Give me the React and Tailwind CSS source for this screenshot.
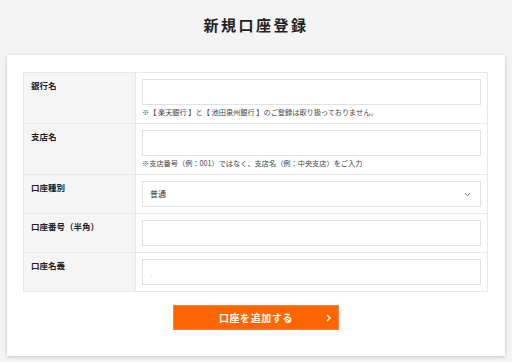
import React from 'react'

const font = { fontFamily: '"Noto Sans CJK JP", "Noto Sans", sans-serif' }

function Row({ label, children, last }) {
  return (
    <div className={`flex ${last ? '' : 'border-b border-[#e8e8e8]'}`}>
      <div className="w-[112px] shrink-0 bg-[#f5f5f5] border-r border-[#e8e8e8] px-[7px] py-[6px]">
        <p className="text-[8.5px] leading-[12px] font-bold text-[#222]">{label}</p>
      </div>
      <div className="flex-1 px-[6px] py-[6px]">{children}</div>
    </div>
  )
}

function Field({ placeholder }) {
  return (
    <input
      type="text"
      placeholder={placeholder}
      className="block w-full h-[26px] border border-[#dfe1e8] bg-white px-[7px] text-[8px] outline-none placeholder:text-[#c8c8c8]"
    />
  )
}

export default function App() {
  return (
    <div className="min-h-[362px] bg-[#f4f4f4] pt-[16px]" style={font}>
      {/* Title */}
      <h1 className="text-center text-[15px] leading-[18px] font-bold tracking-[2.5px] text-[#222]">新規口座登録</h1>

      {/* Card */}
      <div className="mx-[7px] mt-[21px] bg-white shadow-[0_1px_4px_rgba(0,0,0,0.18)] pt-[17px] pb-[26px] px-[16px]">
        <div className="border border-[#e8e8e8] mr-[1px]">
          <Row label="銀行名">
            <Field />
            <p className="mt-[2px] text-[7.2px] leading-[10px] text-[#444]">
              ※【 楽天銀行 】と【 池田泉州銀行 】のご登録は取り扱っておりません。
            </p>
          </Row>
          <Row label="支店名">
            <Field />
            <p className="mt-[2px] text-[7.2px] leading-[10px] text-[#444]">
              ※支店番号（例：001）ではなく、支店名（例：中央支店）をご入力
            </p>
          </Row>
          <Row label="口座種別">
            <div className="flex h-[26px] items-center justify-between border border-[#dfe1e8] bg-white pl-[7px] pr-[9px]">
              <span className="text-[8px] text-[#333]">普通</span>
              <svg width="7" height="5" viewBox="0 0 7 5" fill="none">
                <path d="M1 1.2 3.5 3.6 6 1.2" stroke="#666a80" strokeWidth="1" />
              </svg>
            </div>
          </Row>
          <Row label="口座番号（半角）">
            <Field />
          </Row>
          <Row label="口座名義" last>
            <Field placeholder="." />
          </Row>
        </div>

        {/* Submit */}
        <div className="flex justify-center mt-[13px]">
          <button className="relative w-[166px] h-[25px] bg-[#ff6600] border border-[#ff7f40] text-white text-[10px] font-bold tracking-[0.6px] flex items-center justify-center">
            口座を追加する
            <svg className="absolute right-[7px] top-1/2 -translate-y-1/2" width="5" height="8" viewBox="0 0 5 8" fill="none">
              <path d="M1 1 4 4 1 7" stroke="white" strokeWidth="1.4" />
            </svg>
          </button>
        </div>
      </div>
    </div>
  )
}
